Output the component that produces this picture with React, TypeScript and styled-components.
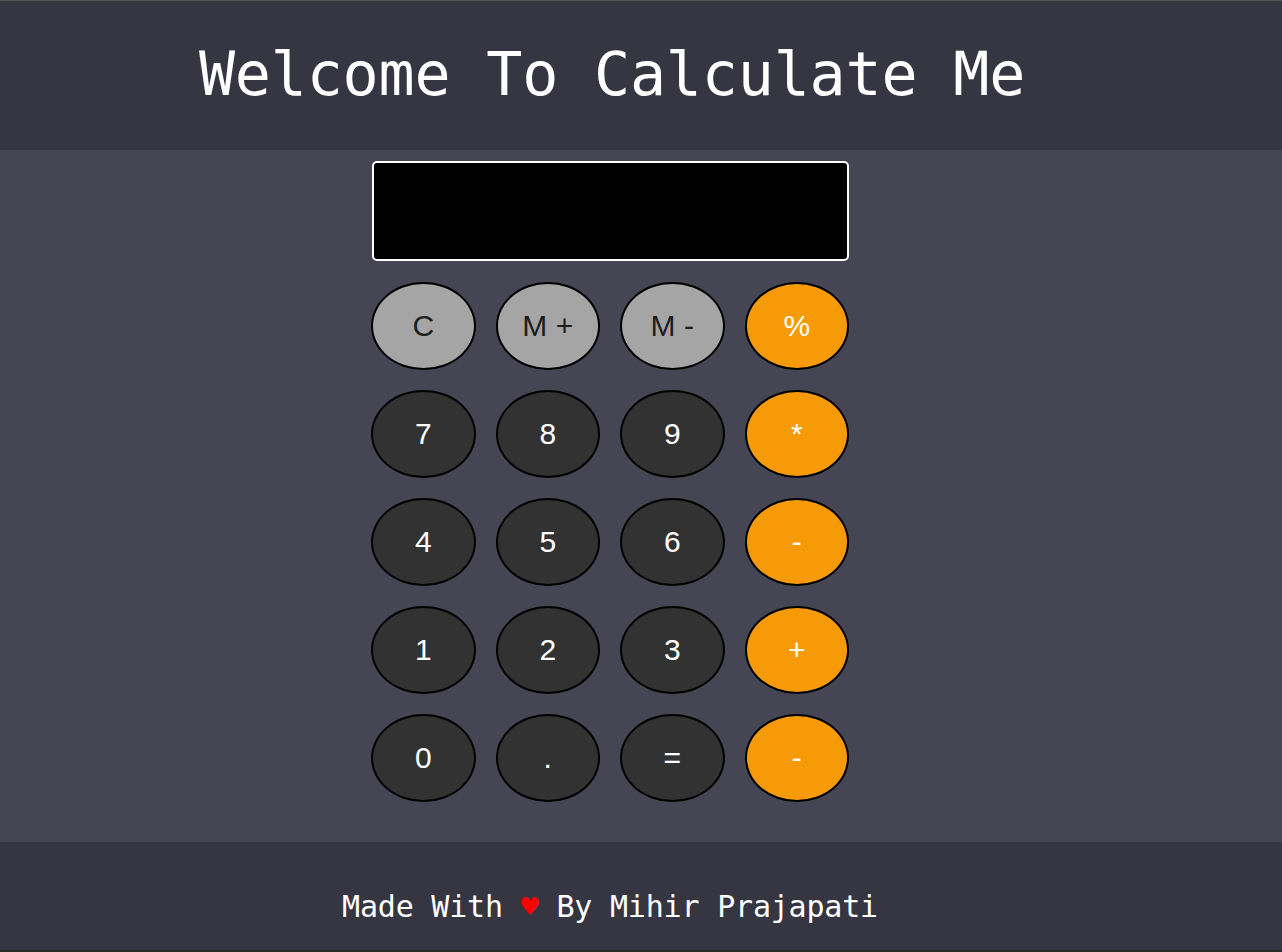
import React from "react";
import styled, { createGlobalStyle } from "styled-components";

const GlobalStyle = createGlobalStyle`
  html, body { margin: 0; padding: 0; }
  body { background: #363643; font-family: "Liberation Sans", Arial, sans-serif; }
  * { box-sizing: border-box; }
`;

const Page = styled.div`
  min-height: 952px;
  display: flex;
  flex-direction: column;
  border-top: 1px solid #55555c;
  border-bottom: 2px solid #2a2a2c;
`;

const Header = styled.header`
  height: 149px;
  background: #363643;
  display: flex;
  align-items: center;
  justify-content: center;
  padding: 0 58px 0 0;
`;

const Title = styled.h1`
  margin: 0;
  font-family: "DejaVu Sans Mono", "Liberation Mono", monospace;
  font-weight: 400;
  font-size: 60px;
  color: #ffffff;
  letter-spacing: -0.2px;
  transform: translateY(-2px);
`;

const Main = styled.main`
  flex: 1;
  background: #454554;
  display: flex;
  justify-content: center;
  padding: 11px 62px 40px 0;
`;

const Calculator = styled.div`
  width: 478px;
  display: flex;
  flex-direction: column;
  gap: 21px;
`;

const Display = styled.div`
  height: 100px;
  background: #000;
  border: 2px solid #ffffff;
  border-radius: 5px;
  margin-left: 1px;
`;

const Keys = styled.div`
  display: grid;
  grid-template-columns: repeat(4, 1fr);
  grid-auto-rows: 88px;
  column-gap: 20px;
  row-gap: 20px;
`;

type Kind = "fn" | "num" | "op";

const palette: Record<Kind, { bg: string; fg: string }> = {
  fn: { bg: "#a5a5a5", fg: "#1d1d1d" },
  num: { bg: "#323232", fg: "#ffffff" },
  op: { bg: "#f69a07", fg: "#ffffff" },
};

const Key = styled.button<{ $kind: Kind }>`
  border: 2px solid #000;
  border-radius: 50%;
  background: ${(p) => palette[p.$kind].bg};
  color: ${(p) => palette[p.$kind].fg};
  font-family: "Liberation Sans", Arial, sans-serif;
  font-size: 30px;
  display: flex;
  align-items: center;
  justify-content: center;
  padding: 0;
  cursor: pointer;
`;

const Footer = styled.footer`
  height: 108px;
  background: #363643;
  display: flex;
  align-items: center;
  justify-content: center;
  padding: 20px 62px 0 0;
`;

const Credit = styled.p`
  margin: 0;
  font-family: "DejaVu Sans Mono", "Liberation Mono", monospace;
  font-size: 30px;
  color: #ffffff;
  letter-spacing: -0.2px;
`;

const Heart = styled.span`
  color: #ff0000;
`;

const keys: { label: string; kind: Kind }[] = [
  { label: "C", kind: "fn" },
  { label: "M +", kind: "fn" },
  { label: "M -", kind: "fn" },
  { label: "%", kind: "op" },
  { label: "7", kind: "num" },
  { label: "8", kind: "num" },
  { label: "9", kind: "num" },
  { label: "*", kind: "op" },
  { label: "4", kind: "num" },
  { label: "5", kind: "num" },
  { label: "6", kind: "num" },
  { label: "-", kind: "op" },
  { label: "1", kind: "num" },
  { label: "2", kind: "num" },
  { label: "3", kind: "num" },
  { label: "+", kind: "op" },
  { label: "0", kind: "num" },
  { label: ".", kind: "num" },
  { label: "=", kind: "num" },
  { label: "-", kind: "op" },
];

export default function App() {
  return (
    <>
      <GlobalStyle />
      <Page>
        <Header>
          <Title>Welcome To Calculate Me</Title>
        </Header>
        <Main>
          <Calculator>
            <Display />
            <Keys>
              {keys.map((k, i) => (
                <Key key={i} $kind={k.kind}>
                  {k.label}
                </Key>
              ))}
            </Keys>
          </Calculator>
        </Main>
        <Footer>
          <Credit>
            Made With <Heart>♥</Heart> By Mihir Prajapati
          </Credit>
        </Footer>
      </Page>
    </>
  );
}
